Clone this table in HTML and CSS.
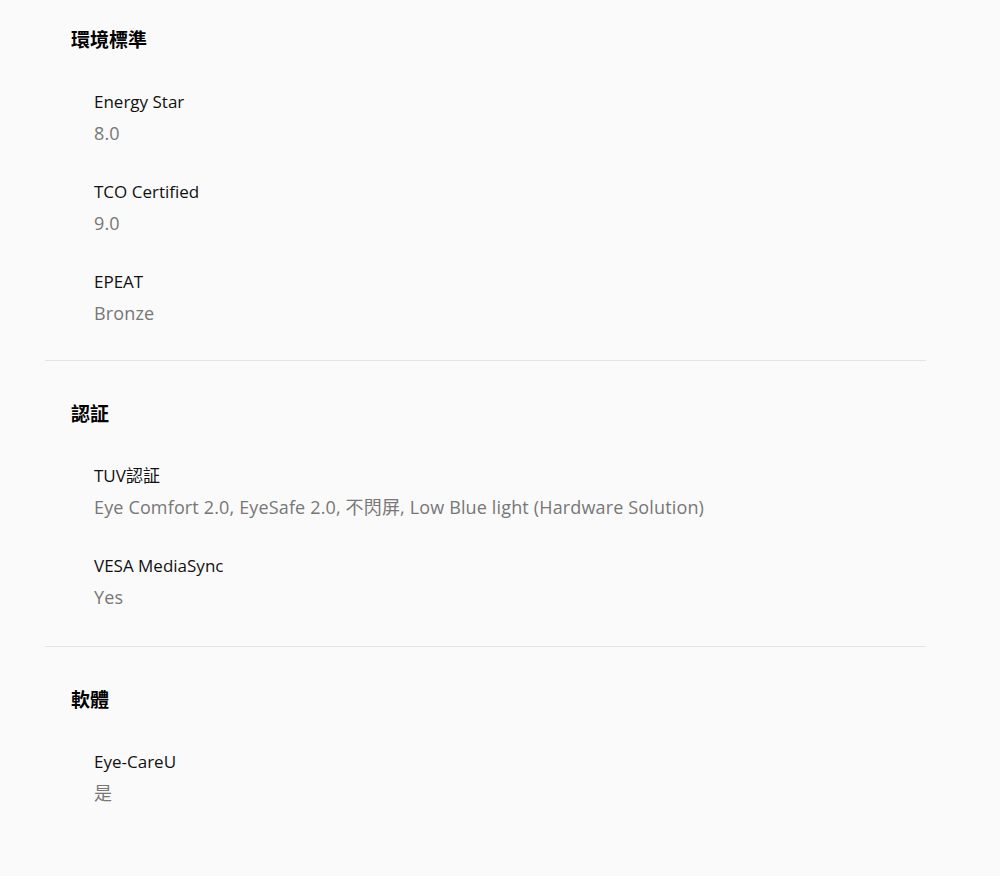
FILE: index.html
```html
<!DOCTYPE html>
<html lang="zh-Hant">
<head>
    <meta charset="UTF-8">
    <meta name="viewport" content="width=device-width, initial-scale=1.0">
    <title>規格</title>
    <link rel="stylesheet" href="styles.css">
</head>
<body>

    <div class="spec-list">
        <!-- 環境標準 -->
        <section class="spec-group">
            <h2 class="group-title">環境標準</h2>
            <dl class="spec-items">
                <div class="spec-item">
                    <dt>Energy Star</dt>
                    <dd>8.0</dd>
                </div>
                <div class="spec-item">
                    <dt>TCO Certified</dt>
                    <dd>9.0</dd>
                </div>
                <div class="spec-item">
                    <dt>EPEAT</dt>
                    <dd>Bronze</dd>
                </div>
            </dl>
        </section>

        <!-- 認証 -->
        <section class="spec-group">
            <h2 class="group-title">認証</h2>
            <dl class="spec-items">
                <div class="spec-item">
                    <dt>TUV認証</dt>
                    <dd>Eye Comfort 2.0, EyeSafe 2.0, 不閃屏, Low Blue light (Hardware Solution)</dd>
                </div>
                <div class="spec-item">
                    <dt>VESA MediaSync</dt>
                    <dd>Yes</dd>
                </div>
            </dl>
        </section>

        <!-- 軟體 -->
        <section class="spec-group">
            <h2 class="group-title">軟體</h2>
            <dl class="spec-items">
                <div class="spec-item">
                    <dt>Eye-CareU</dt>
                    <dd>是</dd>
                </div>
            </dl>
        </section>
    </div>

</body>
</html>
```

FILE: styles.css
```css
/* General */
body {
    margin: 0;
    background: #fafafa;
    color: #111;
    font-family: "Open Sans", "Noto Sans CJK TC", sans-serif;
}

.spec-list {
    width: 881px;
    margin-left: 45px;
}

/* Groups */
.spec-group {
    padding: 41px 0 17px;
    border-bottom: 1px solid #e3e3e3;
}

.spec-group:first-child {
    padding: 28px 0 15px;
}

.spec-group:last-child {
    border-bottom: none;
}

.group-title {
    margin: 0 0 23px 26px;
    font-size: 19px;
    font-weight: 700;
    line-height: 24px;
    color: #000;
}

/* Items */
.spec-items {
    margin: 0;
    padding-left: 49px;
}

.spec-item {
    padding: 11px 0 16px;
}

.spec-item dt {
    font-size: 17px;
    line-height: 31px;
    color: #111;
}

.spec-item dd {
    margin: 0;
    font-size: 18px;
    line-height: 32px;
    color: #777;
    letter-spacing: 0.15px;
}
```
